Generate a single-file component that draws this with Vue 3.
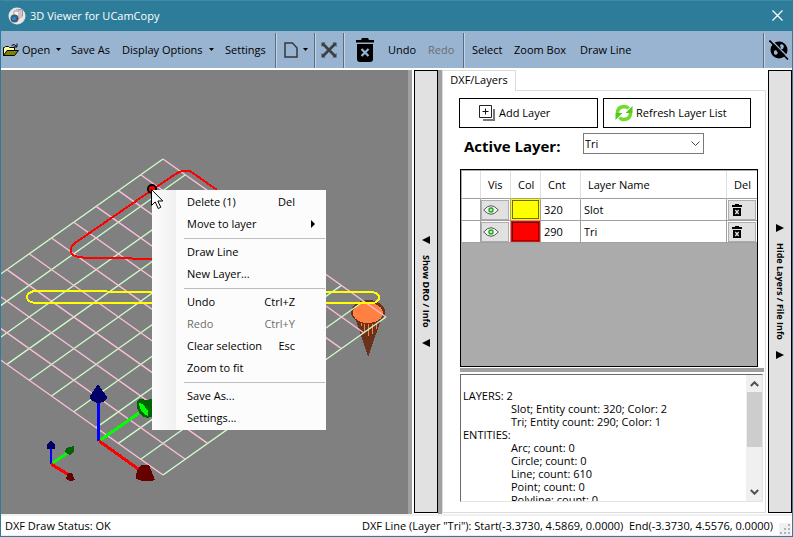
<script setup>
import { ref } from 'vue'

const activeLayer = ref('Tri')
const layers = [
  { name: 'Slot', count: 320, color: 'yellow' },
  { name: 'Tri', count: 290, color: 'red' },
]

const menu = [
  [
    { label: 'Delete (1)', key: 'Del' },
    { label: 'Move to layer', sub: true },
  ],
  [{ label: 'Draw Line' }, { label: 'New Layer...' }],
  [
    { label: 'Undo', key: 'Ctrl+Z' },
    { label: 'Redo', key: 'Ctrl+Y', disabled: true },
    { label: 'Clear selection', key: 'Esc' },
    { label: 'Zoom to fit' },
  ],
  [{ label: 'Save As...' }, { label: 'Settings...' }],
]

const fileInfo = [
  '',
  'LAYERS: 2',
  '\tSlot; Entity count: 320; Color: 2',
  '\tTri; Entity count: 290; Color: 1',
  'ENTITIES:',
  '\tArc; count: 0',
  '\tCircle; count: 0',
  '\tLine; count: 610',
  '\tPoint; count: 0',
  '\tPolyline; count: 0',
].join('\n')

// Isometric floor grid: ten cells a side, each (22.3, 15.8) px along an edge
const DX = 22.3
const DY = 15.8
const grid = Array.from({ length: 11 }, (_, k) => ({
  pink: { x1: 162 - DX * k, y1: 89 + DY * k, x2: 162 + DX * (10 - k), y2: 89 + DY * (10 + k) },
  green: { x1: 162 + DX * k, y1: 89 + DY * k, x2: 162 + DX * (k - 10), y2: 89 + DY * (k + 10) },
}))
</script>

<template>
  <div class="window">
    <header class="titlebar">
      <svg class="app-icon" width="18" height="18" viewBox="0 0 18 18">
        <circle cx="9" cy="9" r="8.5" fill="#e4e6e8" />
        <path d="M6 4h5v8H6zM8 3h5v8M10 2.500h4.500v7" fill="#f6f6f6" stroke="#a9969a" />
        <circle cx="6.500" cy="11.500" r="4" fill="#48576a" />
        <circle cx="6" cy="11.500" r="2" fill="#1d8bd0" />
      </svg>
      <h1>3D Viewer for UCamCopy</h1>
      <button class="close" aria-label="Close">
        <svg width="11" height="11" viewBox="0 0 11 11"><path d="M.5.5l10 10M10.500.5l-10 10" stroke="#fff" stroke-width="1.200" /></svg>
      </button>
    </header>

    <nav class="toolbar">
      <button class="open">
        <svg width="16" height="14" viewBox="0 0 16 14">
          <path d="M.5 12.500v-8h1l1-1h3l1 1h5v3" fill="#ffff9c" stroke="#000" />
          <path d="M.5 12.500l3.500-5h11.500l-4 5z" fill="#808000" stroke="#000" />
          <path d="M8.500 2.500q2.500-2.500 5 1M14 .5v3.500h-3.500" fill="none" stroke="#000" />
        </svg>
        Open
        <svg class="caret" width="5" height="3" viewBox="0 0 5 3"><path d="M0 0h5L2.500 3z" /></svg>
      </button>
      <button class="save">Save As</button>
      <button class="options">Display Options
        <svg class="caret" width="5" height="3" viewBox="0 0 5 3"><path d="M0 0h5L2.500 3z" /></svg>
      </button>
      <button class="settings">Settings</button>
      <i class="rule"></i>
      <button class="icon page" aria-label="New page">
        <svg width="14" height="16" viewBox="0 0 14 16"><path d="M1 1h7.500l4.500 5v9H1z" fill="none" stroke="#35373b" stroke-width="1.500" /></svg>
        <svg class="caret" width="5" height="3" viewBox="0 0 5 3"><path d="M0 0h5L2.500 3z" /></svg>
      </button>
      <i class="rule"></i>
      <button class="icon fit" aria-label="Zoom to fit">
        <svg width="16" height="16" viewBox="0 0 16 16">
          <path d="M2 2l12 12M14 2L2 14" stroke="#3c3f43" stroke-width="2.800" />
          <path d="M.5.5h4L.5 5zM15.500.5V5l-4-4.500zM.5 15.500V11l4 4.500zM15.500 15.500h-4l4-4.500z" fill="#3c3f43" />
        </svg>
      </button>
      <i class="rule"></i>
      <button class="icon trash" aria-label="Delete">
        <svg width="20" height="24" viewBox="0 0 20 24">
          <path d="M1 2h5l1-2h6l1 2h5v2.500H1zM2 6h16v15q0 3-3 3H5q-3 0-3-3z" />
          <path d="M6.500 11l7 7M13.500 11l-7 7" stroke="#99b4d1" stroke-width="2.200" />
        </svg>
      </button>
      <button class="undo">Undo</button>
      <button class="redo" disabled>Redo</button>
      <i class="rule"></i>
      <button class="select">Select</button>
      <button class="zoom">Zoom Box</button>
      <button class="draw">Draw Line</button>
      <span class="spacer"></span>
      <i class="rule"></i>
      <button class="icon hide" aria-label="Hide solid">
        <svg width="20" height="20" viewBox="0 0 20 20">
          <circle cx="10" cy="10" r="8.500" />
          <path d="M11 5l2-1 2 2-1 3-2 0M5 11l2-1 2 3-2 2-2-1z" fill="#99b4d1" />
          <path d="M2 0l18 18" stroke="#99b4d1" stroke-width="1.500" />
          <path d="M.5.5l18.500 19" stroke="#000" stroke-width="1.600" />
        </svg>
      </button>
    </nav>

    <main class="workspace">
      <section class="viewport" aria-label="3D view">
        <svg class="scene" width="100%" height="100%">
          <g shape-rendering="crispEdges">
            <path d="M352 241l15 46 16-46z" fill="#6b321b" />
            <ellipse cx="367" cy="242" rx="17" ry="12" fill="#6b321b" />
            <ellipse cx="367" cy="243" rx="15" ry="10" fill="#ff8040" />
            <path d="M363 254v8M367 254v12M371 254v10M375 253v6M360 253v3" stroke="#ff8040" />
          </g>
          <g stroke-width="1.300">
            <line v-for="(g, i) in grid" :key="'g' + i" v-bind="g.green" stroke="#ccffcc" />
            <line v-for="(g, i) in grid" :key="'p' + i" v-bind="g.pink" stroke="#ffc0d8" />
          </g>
          <g shape-rendering="crispEdges">
            <g fill="none" stroke-width="2">
              <path d="M151 120l22-15q8-5 11-4h5l27 19M151 120L74 173q-6 5-4 9 1 4 8 5l8 1h24l41 1h30" stroke="#f00" />
              <path d="M33 221H60L151 222H370q8 1 8 5 0 6-8 6H34q-8-1-8-6 0-4 7-6z" stroke="#ff0" />
            </g>

            <path d="M98 371l40-28" stroke="#0f0" stroke-width="3" />
            <path d="M136 331q3-4 8-1l8-1v17l-6 2q-8-2-10-11z" fill="#006400" />
            <path d="M138 333l4 1 5 7v5l-5-3-3-5z" fill="#0f0" />
            <path d="M97 371V328" stroke="#00f" stroke-width="3" />
            <path d="M97 314l9 13q0 3-4 5l-5 1q-9-2-8-7z" fill="#000066" />
            <path d="M98 371l45 32" stroke="#f00" stroke-width="3" />
            <path d="M141 395l7 0 6 15q-9 3-19-1-1-9 6-14z" fill="#640000" />

            <path d="M50 394l18-12" stroke="#0f0" stroke-width="3" />
            <path d="M65 378l8-2v5l-4 4-5-3z" fill="#006400" />
            <path d="M50 394v-18" stroke="#00f" stroke-width="2" />
            <path d="M50 371l4 4v4h-8v-5z" fill="#000066" />
            <path d="M50 394l18 11" stroke="#f00" stroke-width="3" />
            <path d="M67 403l4 0 3 7q-5 2-9-1z" fill="#640000" />
          </g>
          <circle cx="151" cy="119" r="4" fill="#f00" stroke="#000" stroke-width="2" />
        </svg>

        <div class="context-menu" role="menu">
          <div v-for="(group, gi) in menu" :key="gi" class="group">
            <button v-for="item in group" :key="item.label" role="menuitem" :disabled="item.disabled">
              <span>{{ item.label }}</span>
              <kbd v-if="item.key">{{ item.key }}</kbd>
              <svg v-if="item.sub" width="4" height="8" viewBox="0 0 4 8"><path d="M0 0l4 4-4 4z" /></svg>
            </button>
          </div>
        </div>
        <svg class="pointer" width="13" height="21" viewBox="0 0 13 21">
          <path d="M.5.5v16l3.700-3.600 3 6.600 2.600-1.200-3-6.300h5z" fill="#fff" stroke="#000" />
        </svg>
      </section>

      <button class="side-bar left">
        <svg width="8" height="8" viewBox="0 0 8 8"><path d="M8 0v8L0 4z" /></svg>
        <span>Show DRO / Info</span>
        <svg width="8" height="8" viewBox="0 0 8 8"><path d="M8 0v8L0 4z" /></svg>
      </button>
      <i class="splitter"></i>

      <aside class="panel">
        <div class="tabs" role="tablist">
          <button role="tab" aria-selected="true">DXF/Layers</button>
          <i></i>
        </div>
        <div class="tab-page">
          <div class="actions">
            <button class="add">
              <svg width="16" height="16" viewBox="0 0 16 16">
                <path d="M4 15h11V4" fill="none" stroke="#777" stroke-width="2" />
                <path d="M.5.5h12v12H.5z" fill="#fff" stroke="#222" />
                <path d="M6.500 3.500v6M3.500 6.500h6" stroke="#111" />
              </svg>
              Add Layer
            </button>
            <button class="refresh">
              <svg width="18" height="18" viewBox="0 0 18 18">
                <path d="M2.500 9q0-6 6.500-6.500 3 0 4.500 2" fill="none" stroke="#6fdc28" stroke-width="3.500" />
                <path d="M17.500 2v7h-7z" fill="#55c81e" />
                <path d="M15.500 9q0 6-6.500 6.500-3 0-4.500-2" fill="none" stroke="#6fdc28" stroke-width="3.500" />
                <path d="M.5 16V9h7z" fill="#55c81e" />
              </svg>
              Refresh Layer List
            </button>
          </div>

          <div class="active">
            <label for="active-layer">Active Layer:</label>
            <div class="combo">
              <select id="active-layer" v-model="activeLayer">
                <option v-for="l in layers" :key="l.name">{{ l.name }}</option>
              </select>
              <svg width="9" height="5" viewBox="0 0 9 5"><path d="M.5.5l4 4 4-4" fill="none" stroke="#444" /></svg>
            </div>
          </div>

          <div class="grid-box">
            <table>
              <thead>
                <tr>
                  <th class="c-head"></th>
                  <th class="c-vis">Vis</th>
                  <th class="c-col">Col</th>
                  <th class="c-cnt">Cnt</th>
                  <th class="c-name">Layer Name</th>
                  <th class="c-del">Del</th>
                </tr>
              </thead>
              <tbody>
                <tr v-for="l in layers" :key="l.name">
                  <td></td>
                  <td>
                    <button class="cell" aria-label="Toggle visibility">
                      <svg width="16" height="10" viewBox="0 0 16 10">
                        <path d="M.7 5q7.300-8.600 14.600 0-7.300 8.600-14.600 0z" fill="#f4f4f4" stroke="#555" />
                        <circle cx="8" cy="5" r="2" fill="#b8f0b8" stroke="#1ca81c" stroke-width="1.400" />
                      </svg>
                    </button>
                  </td>
                  <td><button class="swatch" :class="l.color" aria-label="Layer color"></button></td>
                  <td>{{ l.count }}</td>
                  <td>{{ l.name }}</td>
                  <td>
                    <button class="cell" aria-label="Delete layer">
                      <svg width="10" height="12" viewBox="0 0 10 12">
                        <path d="M0 1h3V0h4v1h3v2H0zM1 4h8v8H1z" />
                        <path d="M3.300 6l3.400 4M6.700 6l-3.400 4" stroke="#e1e1e1" stroke-width="1.300" />
                      </svg>
                    </button>
                  </td>
                </tr>
              </tbody>
            </table>
          </div>
          <i class="hsplit"></i>

          <div class="info">
            <textarea aria-label="File info" readonly :value="fileInfo"></textarea>
            <div class="scrollbar">
              <svg width="9" height="6" viewBox="0 0 9 6"><path d="M.8 5L4.500 1.300 8.200 5" fill="none" stroke="#505050" stroke-width="2" /></svg>
              <i class="thumb"></i>
              <svg width="9" height="6" viewBox="0 0 9 6"><path d="M.8 1l3.700 3.700L8.200 1" fill="none" stroke="#505050" stroke-width="2" /></svg>
            </div>
          </div>
        </div>
      </aside>

      <button class="side-bar right">
        <svg width="8" height="8" viewBox="0 0 8 8"><path d="M0 0v8l8-4z" /></svg>
        <span>Hide Layers / File Info</span>
        <svg width="8" height="8" viewBox="0 0 8 8"><path d="M0 0v8l8-4z" /></svg>
      </button>
    </main>

    <footer class="status">
      <span>DXF Draw Status: OK</span>
      <span class="coords">DXF Line (Layer "Tri"): Start(-3.3730, 4.5869, 0.0000)&nbsp; End(-3.3730, 4.5576, 0.0000)</span>
      <svg width="12" height="12" viewBox="0 0 12 12">
        <path d="M9 1h2v2H9zM9 5h2v2H9zM9 9h2v2H9zM5 5h2v2H5zM5 9h2v2H5zM1 9h2v2H1z" fill="#b4b4b4" />
      </svg>
    </footer>
  </div>
</template>

<style>
body {
  margin: 0;
}
</style>

<style scoped>
* {
  box-sizing: border-box;
}
.window {
  display: flex;
  flex-direction: column;
  height: 100vh;
  border: 1px solid #2d7d9a;
  border-top: 0;
  background: #fff;
  color: #000;
  font: 11px/16px "Open Sans", "Noto Sans", sans-serif;
  overflow: hidden;
}
button {
  margin: 0;
  padding: 0;
  border: 0;
  background: none;
  color: inherit;
  font: inherit;
  white-space: nowrap;
}
svg {
  display: block;
  flex: none;
}

.titlebar {
  display: flex;
  align-items: center;
  flex: none;
  height: 31px;
  padding: 0 9px 1px 7px;
  gap: 4px;
  background: #2d7d9a;
  border-top: 1px solid #4189a4;
  color: #fff;
}
.titlebar h1 {
  flex: 1;
  margin: 0;
  font-size: 11px;
  font-weight: 400;
}

.toolbar {
  display: flex;
  align-items: center;
  flex: none;
  height: 37px;
  background: #99b4d1;
}
.toolbar button {
  display: flex;
  align-items: center;
  flex: none;
}
.toolbar .rule {
  flex: none;
  width: 2px;
  height: 35px;
  margin-top: 2px;
  border-left: 1px solid #5c6d80;
  border-right: 1px solid #c2d3e5;
}
.toolbar .open { width: 70px; padding-left: 2px; gap: 3px; }
.toolbar .save { width: 51px; }
.toolbar .options { width: 103px; }
.toolbar .settings { width: 50px; }
.caret { margin-left: 3px; }
.options .caret { margin-left: 6px; }
.toolbar .page { width: 37px; padding-left: 7px; gap: 2px; }
.toolbar .fit { width: 27px; padding-left: 5px; }
.toolbar .trash { width: 43px; padding-left: 10px; }
.toolbar .undo { width: 40px; }
.toolbar .redo { width: 35px; color: #6d6d6d; }
.toolbar .select { width: 49px; padding-left: 7px; }
.toolbar .zoom { width: 66px; }
.spacer { flex: 1; }
.toolbar .hide { width: 27px; padding-left: 4px; }

.workspace {
  display: flex;
  flex: 1;
  min-height: 0;
  padding-top: 2px;
}
.viewport {
  position: relative;
  flex: 1;
  min-width: 0;
  margin-right: 2px;
  border-right: 4px solid #a0a0a0;
  background: #808080;
}
.scene {
  position: absolute;
  inset: 0;
}
.pointer {
  position: absolute;
  left: 150px;
  top: 119px;
}
.context-menu {
  position: absolute;
  left: 151px;
  top: 120px;
  width: 174px;
  padding: 1px 0;
  background: linear-gradient(90deg, #fcfcfc, #f0f0f0 24px, #fcfcfc 24px);
}
.group + .group {
  padding-top: 6px;
  background: linear-gradient(#bdbdbd, #bdbdbd) 32px 3px / 141px 1px no-repeat;
}
.context-menu button {
  display: flex;
  align-items: center;
  width: 100%;
  height: 22px;
  padding: 0 31px 0 35px;
}
.context-menu span {
  flex: 1;
  text-align: left;
}
.context-menu kbd {
  font: inherit;
}
.context-menu svg {
  margin-right: -20px;
}
.context-menu button:disabled {
  color: #6d6d6d;
}

.side-bar {
  display: flex;
  flex-direction: column;
  align-items: center;
  justify-content: center;
  flex: none;
  width: 24px;
  margin-bottom: 1px;
  border: 1px solid #000;
  background: #e1e1e1;
  gap: 11px;
}
.side-bar span {
  writing-mode: vertical-rl;
  font: bold 9px/12px "Open Sans", "Noto Sans", sans-serif;
}
.splitter {
  flex: none;
  width: 4px;
  background: #a0a0a0;
}

.panel {
  display: flex;
  flex-direction: column;
  flex: none;
  width: 324px;
  margin-right: 2px;
}
.tabs {
  display: flex;
  flex: none;
  height: 21px;
}
.tabs button {
  width: 74px;
  padding-bottom: 2px;
  border: 1px solid #dcdcdc;
  border-bottom: 0;
}
.tabs i {
  flex: 1;
  border-bottom: 1px solid #dcdcdc;
}
.tab-page {
  display: flex;
  flex-direction: column;
  flex: 1;
  min-height: 0;
  margin-bottom: 1px;
  padding: 7px 1px 10px 17px;
  border: 1px solid #dcdcdc;
  border-top: 0;
}
.actions {
  display: flex;
  gap: 5px;
  margin-left: -1px;
}
.actions button {
  display: flex;
  align-items: center;
  height: 30px;
  border: 1px solid #000;
}
.actions .add { width: 139px; padding-left: 19px; gap: 4px; }
.actions .refresh { width: 148px; padding-left: 11px; gap: 3px; }
.active {
  display: flex;
  align-items: center;
  height: 36px;
  padding-left: 4px;
}
.active label {
  width: 119px;
  font-size: 15px;
  font-weight: 700;
}
.combo {
  position: relative;
  width: 121px;
  height: 21px;
  margin-bottom: 5px;
}
.combo select {
  width: 100%;
  height: 100%;
  padding: 0 1px;
  appearance: none;
  border: 1px solid #7a7a7a;
  border-radius: 0;
  background: #fff;
  color: #000;
  font: inherit;
}
.combo svg {
  position: absolute;
  right: 4px;
  top: 8px;
  pointer-events: none;
}

.grid-box {
  flex: 1;
  min-height: 0;
  margin: 5px 6px 1px 0;
  padding: 1px 0 0 1px;
  border: 1px solid #000;
  background: #ababab;
}
table {
  width: 100%;
  border-collapse: separate;
  border-spacing: 0;
  table-layout: fixed;
  background: #fff;
}
th, td {
  padding: 0 0 0 3px;
  border-right: 1px solid #a0a0a0;
  border-bottom: 1px solid #a0a0a0;
  font-weight: 400;
  text-align: left;
}
th {
  height: 28px;
  border-right-color: #e0e0e0;
}
td { height: 22px; }
td:has(button) { padding: 0; }
.c-head { width: 19px; }
.c-vis { width: 30px; padding-left: 7px; }
.c-col { width: 30px; padding-left: 7px; }
.c-cnt { width: 40px; padding-left: 7px; }
.c-name { padding-left: 7px; }
.c-del { width: 30px; padding-left: 7px; }
.cell, .swatch {
  display: flex;
  align-items: center;
  width: 28px;
  height: 20px;
  padding-left: 1px;
  border: 1px solid #adadad;
  background: #e1e1e1;
}
.c-del { border-right: 0; }
td:last-child { border-right: 0; }
td:last-child .cell { padding-left: 3px; margin-left: 1px; }
.swatch { width: 29px; height: 21px; border: 2px solid; }
.yellow { background: #ff0; border-color: #6b6b00; outline: 1px solid #ff0; outline-offset: -1px; }
.red { background: #f00; border-color: #6b0000; outline: 1px solid #f00; outline-offset: -1px; }

.hsplit {
  flex: none;
  height: 4px;
  background: #a0a0a0;
}
.info {
  display: flex;
  flex: none;
  height: 128px;
  margin: 2px 1px 0 0;
  border: 1px solid #e3e3e3;
  border-top: 1px solid #696969;
  border-left: 1px solid #696969;
}
.info textarea {
  flex: 1;
  min-width: 0;
  margin: 0;
  padding: 1px 0 0 2px;
  border: 0;
  resize: none;
  overflow: hidden;
  background: #fff;
  color: #000;
  font: 11px/13px "Open Sans", "Noto Sans", sans-serif;
  tab-size: 48px;
  white-space: pre;
}
.scrollbar {
  display: flex;
  flex-direction: column;
  align-items: center;
  flex: none;
  width: 16px;
  padding: 6px 0;
  background: #f0f0f0;
}
.scrollbar .thumb {
  width: 15px;
  height: 55px;
  margin: 5px 0 auto;
  background: #cdcdcd;
}

.status {
  display: flex;
  align-items: center;
  justify-content: space-between;
  flex: none;
  height: 22px;
  padding: 0 1px 0 4px;
  border-top: 2px solid #f0f0f0;
  border-bottom: 1px solid #e6edf3;
}
.coords {
  margin-left: auto;
  margin-right: 6px;
}
.status svg {
  align-self: flex-end;
  background: #f0f0f0;
}
</style>
